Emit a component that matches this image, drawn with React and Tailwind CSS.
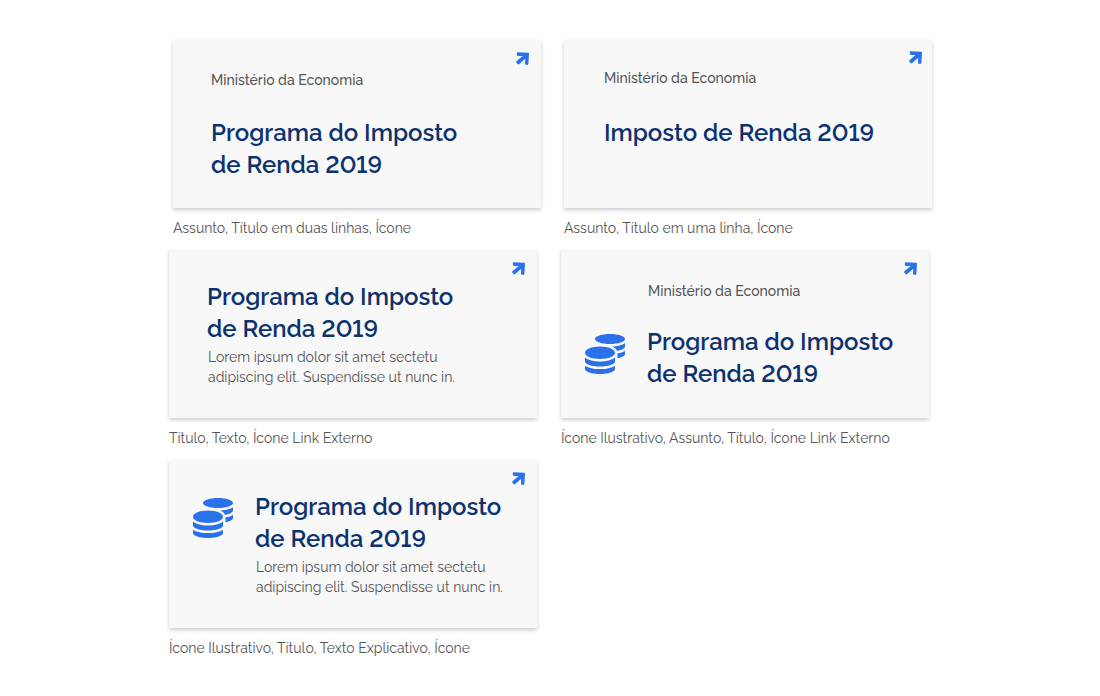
import { FaCoins } from "react-icons/fa";

function ExternalArrow({ className = "right-3 top-3" }) {
  return (
    <svg
      className={`absolute h-[13px] w-[13px] text-[#2972ea] ${className}`}
      viewBox="0 0 13 13"
      fill="currentColor"
      aria-hidden="true"
    >
      <path d="M1.8 0.2 12.2 0.7Q13 0.8 13 1.5L12.4 11.8Q12.2 12.9 11.2 12.9L10.1 12.8Q9 12.7 9 11.5L9.2 6.8 3.3 12.1Q2.4 12.8 1.6 12L0.5 10.8Q-0.2 9.9 0.7 9.1L6.6 4 2 3.9Q0.8 3.8 0.8 2.6L0.8 1.3Q0.8 0.2 1.8 0.2Z" />
    </svg>
  );
}

function Subject({ className = "" }) {
  return (
    <p className={`text-sm font-medium leading-5 text-[#555] ${className}`}>
      Ministério da Economia
    </p>
  );
}

function Title({ children }) {
  return (
    <h2 className="text-2xl font-semibold leading-8 text-[#0c326f]">
      {children}
    </h2>
  );
}

function TwoLineTitle() {
  return (
    <Title>
      Programa do Imposto
      <br />
      de Renda 2019
    </Title>
  );
}

function Description() {
  return (
    <p className="mt-0.5 pl-px text-sm leading-5 text-[#555]">
      Lorem ipsum dolor sit amet sectetu
      <br />
      adipiscing elit. Suspendisse ut nunc in.
    </p>
  );
}

function CoinsIcon({ className }) {
  return (
    <FaCoins className={`h-10 w-10 shrink-0 text-[#2972ea] ${className}`} aria-hidden="true" />
  );
}

function Example({ caption, className, arrowClassName, children }) {
  return (
    <figure>
      <a
        href="#programa"
        className={`relative block min-h-[168px] bg-[#f8f8f8] shadow-[0_2px_4px_rgba(0,0,0,0.2)] ${className}`}
      >
        {children}
        <ExternalArrow className={arrowClassName} />
      </a>
      <figcaption className="pb-3 pt-2.5 text-sm leading-5 text-[#555]">
        {caption}
      </figcaption>
    </figure>
  );
}

export default function App() {
  return (
    <main className="mx-auto max-w-[764px] bg-white pl-px pt-10 font-['Raleway','Lato',sans-serif] lining-nums antialiased">
      <div className="grid grid-cols-1 gap-x-[23px] pl-1 sm:grid-cols-2">
        <Example caption="Assunto, Título em duas linhas, Ícone" className="pl-[38px] pt-[30px]">
          <Subject />
          <div className="mt-[27px]">
            <TwoLineTitle />
          </div>
        </Example>
        <Example
          caption="Assunto, Título em uma linha, Ícone"
          className="pl-10 pt-7"
          arrowClassName="right-2.5 top-[11px]"
        >
          <Subject />
          <div className="mt-[29px]">
            <Title>Imposto de Renda 2019</Title>
          </div>
        </Example>
      </div>
      <div className="grid grid-cols-1 gap-x-6 pr-[3px] sm:grid-cols-2">
        <Example caption="Título, Texto, Ícone Link Externo" className="pl-[38px] pt-[31px]">
          <TwoLineTitle />
          <Description />
        </Example>
        <Example
          caption="Ícone Ilustrativo, Assunto, Título, Ícone Link Externo"
          className="pl-6 pt-[31px]"
        >
          <Subject className="pl-[63px]" />
          <div className="mt-[25px] flex gap-[22px]">
            <CoinsIcon className="mt-2" />
            <TwoLineTitle />
          </div>
        </Example>
        <Example
          caption="Ícone Ilustrativo, Título, Texto Explicativo, Ícone"
          className="pl-6 pt-[31px]"
        >
          <div className="flex gap-[22px]">
            <CoinsIcon className="mt-[7px]" />
            <div>
              <TwoLineTitle />
              <Description />
            </div>
          </div>
        </Example>
      </div>
    </main>
  );
}
